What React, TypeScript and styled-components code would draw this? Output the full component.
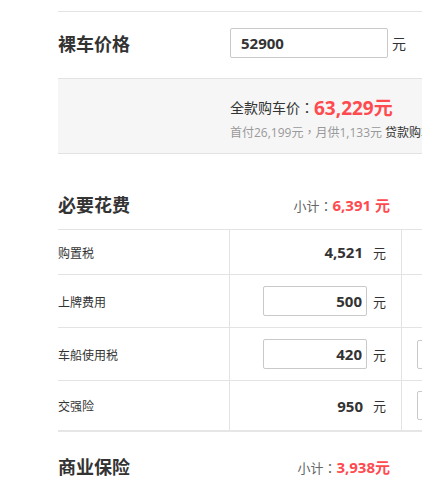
import React from "react";
import styled, { createGlobalStyle } from "styled-components";

const GlobalStyle = createGlobalStyle`
  html, body {
    margin: 0;
    padding: 0;
    background: #fff;
    overflow: hidden;
  }
  body {
    font-family: "Open Sans", "Noto Sans CJK SC", sans-serif;
    color: #333;
  }
`;

interface IFee {
  label: string
  value: string
  editable?: boolean
  extra?: boolean
  height: number
}

const fees: IFee[] = [
  { label: "购置税", value: "4,521", height: 44 },
  { label: "上牌费用", value: "500", editable: true, height: 52 },
  { label: "车船使用税", value: "420", editable: true, extra: true, height: 52 },
  { label: "交强险", value: "950", extra: true, height: 49 },
];

export default function App() {
  return (
    <>
      <GlobalStyle />
      <Page>
        <PriceRow>
          <PriceLabel>裸车价格</PriceLabel>
          <PriceInput defaultValue="52900" />
          <Unit $size={14}>元</Unit>
        </PriceRow>

        <Summary>
          <TotalLine>
            全款购车价<Punct>：</Punct><TotalValue>63,229元</TotalValue>
          </TotalLine>
          <LoanLine>
            首付26,199元<Punct>，</Punct>月供1,133元 <LoanLink>贷款购车</LoanLink>
          </LoanLine>
        </Summary>

        <SectionHeader $gap={25}>
          <SectionTitle>必要花费</SectionTitle>
          <Subtotal>
            小计<Punct>：</Punct><SubtotalValue>6,391 元</SubtotalValue>
          </Subtotal>
        </SectionHeader>

        <FeeTable>
          {fees.map((f) => (
            <FeeRow key={f.label} $height={f.height}>
              <FeeLabel>{f.label}</FeeLabel>
              <FeeValue>
                {f.editable ? (
                  <SmallInput defaultValue={f.value} />
                ) : (
                  <Amount>{f.value}</Amount>
                )}
                <Unit $size={13}>元</Unit>
              </FeeValue>
              <FeeExtra>{f.extra && <ExtraInput />}</FeeExtra>
            </FeeRow>
          ))}
        </FeeTable>

        <SectionHeader $gap={9}>
          <SectionTitle>商业保险</SectionTitle>
          <Subtotal>
            小计<Punct>：</Punct><SubtotalValue>3,938元</SubtotalValue>
          </Subtotal>
        </SectionHeader>
      </Page>
    </>
  );
}

const Page = styled.div`
  width: 640px;
  padding: 11px 0 0 58px;
`

// centred full-width punctuation, as in the original font
const Punct = styled.span`
  font-family: "Noto Sans CJK TC", sans-serif;
  font-weight: normal;
`

const PriceRow = styled.div`
  height: 67px;
  padding-bottom: 5px;
  box-sizing: border-box;
  display: flex;
  align-items: center;
  border-top: 1px solid #e3e3e3;
`

const PriceLabel = styled.div`
  width: 172px;
  font-size: 18px;
  font-weight: bold;
  color: #333;
  font-family: "Noto Sans CJK SC", sans-serif;
`

const PriceInput = styled.input`
  width: 158px;
  height: 30px;
  box-sizing: border-box;
  border: 1px solid #c9c9c9;
  border-radius: 2px;
  padding: 0 10px;
  font-family: "Open Sans", "Noto Sans CJK SC", sans-serif;
  font-size: 15px;
  font-weight: bold;
  color: #333;
  outline: none;
  margin-right: 4px;
`

const Unit = styled.span<{ $size: number }>`
  font-size: ${(p) => p.$size}px;
  color: #333;
  font-family: "Noto Sans CJK SC", sans-serif;
`

const Summary = styled.div`
  border-top: 1px solid #e3e3e3;
  border-bottom: 1px solid #e3e3e3;
  background: #f6f6f6;
  padding: 16px 0 12px 172px;
  display: flex;
  flex-direction: column;
  gap: 4px;
`

const TotalLine = styled.div`
  height: 24px;
  display: flex;
  align-items: center;
  font-size: 14px;
  color: #333;
  font-family: "Noto Sans CJK SC", sans-serif;
`

const TotalValue = styled.span`
  font-family: "Open Sans", "Noto Sans CJK SC", sans-serif;
  font-size: 19px;
  font-weight: bold;
  color: #ff4a4f;
`

const LoanLine = styled.div`
  height: 18px;
  line-height: 18px;
  font-size: 12px;
  color: #999;
  white-space: nowrap;
`

const LoanLink = styled.span`
  color: #333;
`

const SectionHeader = styled.div<{ $gap: number }>`
  margin-top: ${(p) => p.$gap}px;
  height: 50px;
  display: flex;
  align-items: center;
`

const SectionTitle = styled.div`
  width: 172px;
  font-size: 18px;
  font-weight: bold;
  color: #333;
  font-family: "Noto Sans CJK SC", sans-serif;
`

const Subtotal = styled.div`
  width: 174px;
  box-sizing: border-box;
  padding-right: 14px;
  text-align: right;
  font-size: 13px;
  color: #666;
  font-family: "Noto Sans CJK SC", sans-serif;
`

const SubtotalValue = styled.span`
  font-family: "Open Sans", "Noto Sans CJK SC", sans-serif;
  font-size: 15px;
  font-weight: bold;
  color: #ff4a4f;
`

const FeeTable = styled.div`
  border-top: 1px solid #e3e3e3;
  border-bottom: 2px solid #e6e6e6;
`

const FeeRow = styled.div<{ $height: number }>`
  display: flex;
  height: ${(p) => p.$height}px;
  & + & {
    border-top: 1px solid #e3e3e3;
  }
`

const FeeLabel = styled.div`
  width: 171px;
  display: flex;
  align-items: center;
  font-size: 12px;
  color: #333;
  font-family: "Noto Sans CJK SC", sans-serif;
`

const FeeValue = styled.div`
  width: 173px;
  box-sizing: border-box;
  border-left: 1px solid #e3e3e3;
  border-right: 1px solid #e3e3e3;
  padding-right: 15px;
  display: flex;
  align-items: center;
  justify-content: flex-end;
  gap: 6px;
`

const Amount = styled.span`
  padding-right: 4px;
  font-size: 15px;
  font-weight: bold;
  color: #333;
`

const SmallInput = styled.input`
  width: 104px;
  height: 30px;
  box-sizing: border-box;
  border: 1px solid #c9c9c9;
  border-radius: 2px;
  padding: 0 4px;
  text-align: right;
  font-family: "Open Sans", "Noto Sans CJK SC", sans-serif;
  font-size: 15px;
  font-weight: bold;
  color: #333;
  outline: none;
`

const FeeExtra = styled.div`
  flex: 1;
  display: flex;
  align-items: center;
  padding-left: 15px;
`

const ExtraInput = styled(SmallInput)`
  height: 29px;
`
